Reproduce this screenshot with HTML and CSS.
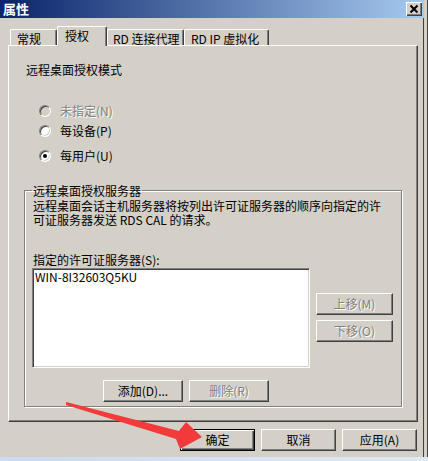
FILE: index.html
```html
<!DOCTYPE html>
<html lang="zh-CN">
<head>
  <meta charset="UTF-8">
  <meta name="viewport" content="width=device-width, initial-scale=1.0">
  <link rel="stylesheet" href="styles.css">
  <title>属性</title>
</head>
<body>

<div class="dialog">
  <div class="titlebar">
    <span class="title">属性</span>
    <span class="close">
      <svg width="16" height="14" viewBox="0 0 16 14">
        <path d="M4.5 3.5 L11.5 10.5 M11.5 3.5 L4.5 10.5" stroke="#000" stroke-width="2" fill="none"/>
      </svg>
    </span>
  </div>

  <div class="tabs">
    <div class="tab t1">常规</div>
    <div class="tab t2 active">授权</div>
    <div class="tab t3">RD 连接代理</div>
    <div class="tab t4">RD IP 虚拟化</div>
  </div>

  <div class="panel">
    <div class="heading">远程桌面授权模式</div>

    <div class="radios">
      <div class="radio disabled"><span class="circle"></span>未指定(N)</div>
      <div class="radio"><span class="circle"></span>每设备(P)</div>
      <div class="radio last"><span class="circle checked"></span>每用户(U)</div>
    </div>

    <fieldset class="group">
      <legend>远程桌面授权服务器</legend>
      <p class="desc">远程桌面会话主机服务器将按列出许可证服务器的顺序向指定的许<br>可证服务器发送 RDS CAL 的请求。</p>
      <label class="list-label">指定的许可证服务器(S):</label>
      <div class="list-row">
        <div class="listbox">WIN-8I32603Q5KU</div>
        <div class="side-buttons">
          <button class="btn side" disabled>上移(M)</button>
          <button class="btn side" disabled>下移(O)</button>
        </div>
      </div>
      <div class="add-row">
        <button class="btn wide">添加(D)...</button>
        <button class="btn wide" disabled>删除(R)</button>
      </div>
    </fieldset>
  </div>

  <div class="footer">
    <button class="btn default">确定</button>
    <button class="btn">取消</button>
    <button class="btn">应用(A)</button>
  </div>
</div>

<!-- red annotation arrow -->
<svg class="arrow" width="428" height="461" viewBox="0 0 428 461">
  <polygon points="66,402 66,405 176,439 180,449 202,437 186,422 179,431" fill="#f23a3a"/>
</svg>

</body>
</html>
```

FILE: styles.css
```css
html, body {
  margin: 0;
  padding: 0;
}

body {
  width: 428px;
  height: 461px;
  overflow: hidden;
  background: linear-gradient(to right, #c9dcf0, #dde9f5);
  font-family: "Noto Sans CJK SC", sans-serif;
  font-size: 12px;
  color: #000;
}

.dialog {
  width: 428px;
  height: 457px;
  background-color: #d4d0c8;
  box-shadow: inset -1px 0 0 #404040, inset -4px 0 0 #d4d0c8, inset -5px 0 0 #404040;
}

.titlebar {
  width: 424px;
  height: 18px;
  display: flex;
  align-items: center;
  justify-content: space-between;
  padding: 0 2px 0 3px;
  box-sizing: border-box;
  background: linear-gradient(to right, #0a246a, #a6caf0);
}

.title {
  color: #fff;
  font-weight: bold;
  font-size: 13px;
  line-height: 18px;
}

.close {
  display: block;
  width: 16px;
  height: 14px;
  box-sizing: border-box;
  background-color: #d4d0c8;
  box-shadow: inset 1px 1px 0 #fff, inset -1px -1px 0 #404040, inset -2px -2px 0 #808080;
}

.close svg {
  display: block;
}

/* tabs */
.tabs {
  display: flex;
  align-items: flex-end;
  height: 19px;
  margin-top: 8px;
  padding-left: 10px;
}

.tab {
  height: 16px;
  box-sizing: border-box;
  padding: 1px 0 0 6px;
  line-height: 15px;
  white-space: nowrap;
  border-top: 1px solid #fff;
  border-left: 1px solid #fff;
  border-right: 1px solid #404040;
  border-radius: 2px 2px 0 0;
  box-shadow: inset -1px 0 0 #808080;
}

.t1 { width: 47px; }
.t2 { width: 50px; }
.t3 { width: 77px; padding-left: 5px; }
.t4 { width: 85px; }

.tab.active {
  position: relative;
  z-index: 1;
  height: 20px;
  margin-bottom: -1px;
  padding: 1px 0 0 7px;
  background-color: #d4d0c8;
}

/* tab page */
.panel {
  width: 410px;
  height: 377px;
  margin-left: 8px;
  box-sizing: border-box;
  border-top: 1px solid #fff;
  border-left: 1px solid #fff;
  border-right: 1px solid #404040;
  border-bottom: 1px solid #404040;
  box-shadow: inset -1px -1px 0 #808080;
}

.heading {
  margin: 17px 0 0 17px;
  line-height: 14px;
}

.radios {
  margin: 24px 0 0 30px;
}

.radio {
  display: flex;
  align-items: center;
  gap: 9px;
  height: 20px;
  line-height: 14px;
}

.radio.last {
  margin-top: 5px;
}

.radio.disabled {
  color: #808080;
  text-shadow: 1px 1px 0 #fff;
}

.circle {
  width: 12px;
  height: 12px;
  box-sizing: border-box;
  border-radius: 50%;
  background-color: #fff;
  border: 1px solid;
  border-color: #808080 #fff #fff #808080;
  box-shadow: inset 1px 1px 0 #404040, inset -1px -1px 0 #d4d0c8;
  display: flex;
  align-items: center;
  justify-content: center;
}

.radio.disabled .circle {
  background-color: #d4d0c8;
}

.circle.checked::after {
  content: "";
  width: 4px;
  height: 4px;
  border-radius: 50%;
  background-color: #000;
}

/* group box */
.group {
  width: 376px;
  box-sizing: border-box;
  margin: 18px 0 0 15px;
  padding: 0 8px 4px 8px;
  border: 1px solid #808080;
  box-shadow: inset 1px 1px 0 #fff, 1px 1px 0 #fff;
}

.group legend {
  padding: 0 1px;
  margin-left: -1px;
  line-height: 13px;
}

.desc {
  margin: 2px 0 0;
  line-height: 14px;
  white-space: nowrap;
}

.list-label {
  display: block;
  margin-top: 26px;
  line-height: 14px;
}

.list-row {
  display: flex;
  margin-top: 1px;
}

.listbox {
  width: 278px;
  height: 100px;
  margin-left: -1px;
  box-sizing: border-box;
  padding: 1px 2px;
  line-height: 13px;
  background-color: #fff;
  border: 1px solid;
  border-color: #808080 #fff #fff #808080;
  box-shadow: inset 1px 1px 0 #404040, inset -1px -1px 0 #d4d0c8;
}

.side-buttons {
  display: flex;
  flex-direction: column;
  gap: 5px;
  margin: 25px 0 0 6px;
}

.add-row {
  display: flex;
  gap: 6px;
  margin: 12px 0 0 70px;
}

/* buttons */
.btn {
  width: 75px;
  height: 22px;
  padding: 0;
  box-sizing: border-box;
  font-family: "Noto Sans CJK SC", sans-serif;
  font-size: 12px;
  line-height: 18px;
  color: #000;
  background-color: #d4d0c8;
  border: 1px solid;
  border-color: #fff #404040 #404040 #fff;
  box-shadow: inset -1px -1px 0 #808080;
}

.btn:disabled {
  color: #808080;
  text-shadow: 1px 1px 0 #fff;
}

.btn.side {
  width: 77px;
}

.btn.wide {
  width: 80px;
}

.btn.default {
  border-color: #000;
  box-shadow: inset 1px 1px 0 #fff, inset -1px -1px 0 #404040, inset -2px -2px 0 #808080;
}

.footer {
  display: flex;
  justify-content: flex-end;
  gap: 6px;
  margin-top: 7px;
  padding-right: 11px;
}

.arrow {
  position: absolute;
  left: 0;
  top: 0;
  pointer-events: none;
}
```
